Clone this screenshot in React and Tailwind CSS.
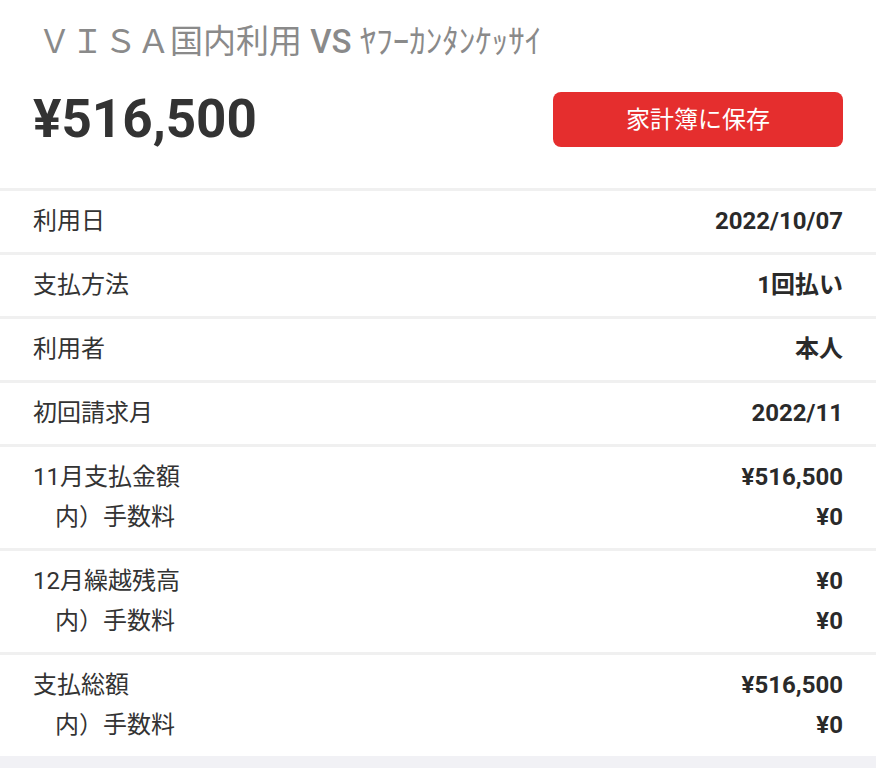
export default function App() {
  const Row = ({ lines }) => (
    <div className="px-[33px] pt-[10px] pb-[11px]">
      {lines.map(([l, v, indent], i) => (
        <div key={i} className="flex items-center justify-between h-[40px]">
          <span className={`text-[24px] text-[#333333] ${indent ? "pl-[22px]" : ""}`}>{l}</span>
          <span className="text-[24px] font-bold text-[#2a2a2a]">{v}</span>
        </div>
      ))}
    </div>
  );
  const Sep = () => <div className="h-[3px] bg-[#f0f0f0]" />;
  return (
    <div
      className="w-[876px] min-h-[768px] bg-white flex flex-col"
      style={{ fontFamily: "Roboto, 'Noto Sans CJK JP', sans-serif" }}
    >
      <div className="px-[33px] pt-[22px] pb-[41px]">
        <div className="text-[33px] leading-[40px] text-[#8a8a8a] pl-[5px] whitespace-nowrap">
          ＶＩＳＡ国内利用 <span className="font-medium">VS</span> ﾔﾌｰｶﾝﾀﾝｹｯｻｲ
        </div>
        <div className="flex items-center justify-between mt-[30px]">
          <div className="text-[53px] leading-[55px] font-bold text-[#333333]">¥516,500</div>
          <button className="w-[290px] h-[55px] rounded-[8px] bg-[#e52e2e] text-white text-[24px] flex items-center justify-center">
            家計簿に保存
          </button>
        </div>
      </div>
      <Sep />
      <Row lines={[["利用日", "2022/10/07"]]} />
      <Sep />
      <Row lines={[["支払方法", "1回払い"]]} />
      <Sep />
      <Row lines={[["利用者", "本人"]]} />
      <Sep />
      <Row lines={[["初回請求月", "2022/11"]]} />
      <Sep />
      <Row lines={[["11月支払金額", "¥516,500"], ["内）手数料", "¥0", true]]} />
      <Sep />
      <Row lines={[["12月繰越残高", "¥0"], ["内）手数料", "¥0", true]]} />
      <Sep />
      <Row lines={[["支払総額", "¥516,500"], ["内）手数料", "¥0", true]]} />
      <div className="flex-1 bg-[#f1f1f5]" />
    </div>
  );
}
